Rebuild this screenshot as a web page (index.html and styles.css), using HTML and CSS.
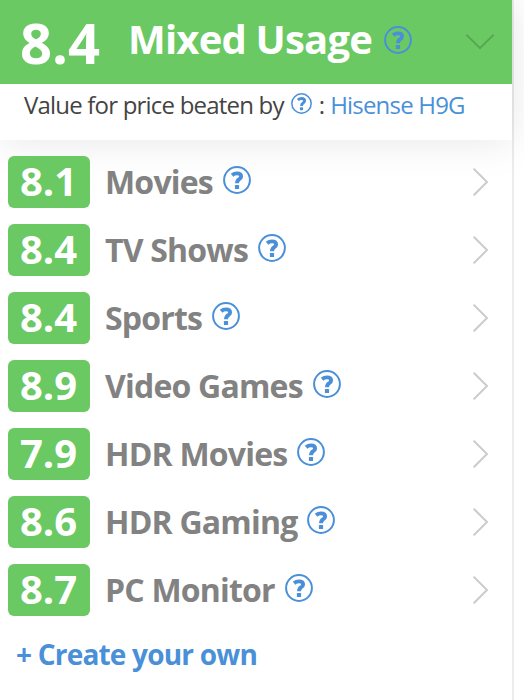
FILE: index.html
```html
<!DOCTYPE html>
<html lang="en">
<head>
    <meta charset="UTF-8">
    <meta name="viewport" content="width=device-width, initial-scale=1.0">
    <title>Mixed Usage</title>
    <link rel="stylesheet" href="styles.css">
</head>
<body>
    <svg class="sprite">
        <symbol id="help" viewBox="0 0 28 28">
            <circle cx="14" cy="14" r="12.9" fill="none" stroke="currentColor" stroke-width="2"/>
            <path d="M9.1 9.3Q11.2 7.4 14 7.4Q18.1 7.4 18.1 10.4Q18.1 12 16.2 13.2Q14 14.5 14 17.3" fill="none" stroke="currentColor" stroke-width="3.9"/>
            <rect x="11.9" y="19" width="4.2" height="4" rx=".6" fill="currentColor"/>
        </symbol>
        <symbol id="arrow" viewBox="0 0 16 28">
            <path d="M1.2 1.2L14 14L1.2 26.8" fill="none" stroke="currentColor" stroke-width="2" stroke-linecap="round"/>
        </symbol>
    </svg>

    <div class="card">
        <div class="top">
            <div class="header">
                <span class="total">8.4</span>
                <h1>Mixed Usage</h1>
                <svg class="help"><use href="#help"/></svg>
                <svg class="chevron" viewBox="0 0 28 16"><path d="M1 1.4L14 14.2L27 1.4" fill="none" stroke="currentColor" stroke-width="2" stroke-linecap="round"/></svg>
            </div>
            <div class="value">
                <span>Value for price beaten by</span>
                <svg class="help small"><use href="#help"/></svg>
                <span class="colon">:</span>
                <a href="#">Hisense H9G</a>
            </div>
        </div>
        <div class="list">
            <div class="row"><span class="score">8.1</span><span class="name">Movies</span><svg class="help"><use href="#help"/></svg><svg class="arrow"><use href="#arrow"/></svg></div>
            <div class="row"><span class="score">8.4</span><span class="name">TV Shows</span><svg class="help"><use href="#help"/></svg><svg class="arrow"><use href="#arrow"/></svg></div>
            <div class="row"><span class="score">8.4</span><span class="name">Sports</span><svg class="help"><use href="#help"/></svg><svg class="arrow"><use href="#arrow"/></svg></div>
            <div class="row"><span class="score">8.9</span><span class="name">Video Games</span><svg class="help"><use href="#help"/></svg><svg class="arrow"><use href="#arrow"/></svg></div>
            <div class="row"><span class="score">7.9</span><span class="name">HDR Movies</span><svg class="help"><use href="#help"/></svg><svg class="arrow"><use href="#arrow"/></svg></div>
            <div class="row"><span class="score">8.6</span><span class="name">HDR Gaming</span><svg class="help"><use href="#help"/></svg><svg class="arrow"><use href="#arrow"/></svg></div>
            <div class="row"><span class="score">8.7</span><span class="name">PC Monitor</span><svg class="help"><use href="#help"/></svg><svg class="arrow"><use href="#arrow"/></svg></div>
        </div>
        <a class="create" href="#">+ Create your own</a>
    </div>
</body>
</html>
```
FILE: styles.css
```css
* {
    box-sizing: border-box;
}
body {
    margin: 0;
    height: 700px;
    overflow: hidden;
    background-color: #fff;
    font-family: "Open Sans", sans-serif;
    letter-spacing: -0.8px;
}
a {
    color: #4a90d9;
    text-decoration: none;
}
.sprite {
    display: none;
}
.card {
    width: 514px;
    height: 700px;
    border-right: 2px solid #ececec;
}
.top {
    height: 140px;
    background-color: #fff;
    box-shadow: 0 0 40px rgba(0, 0, 0, 0.1);
}
.header {
    display: flex;
    height: 84px;
    padding-left: 20px;
    background-color: #6ac962;
    color: #fff;
}
.total {
    width: 108px;
    font-size: 56px;
    font-weight: 700;
    line-height: 84px;
    letter-spacing: 0;
}
h1 {
    margin: 0;
    font-size: 40px;
    font-weight: 700;
    line-height: 78px;
    white-space: nowrap;
}
.help {
    flex: none;
    width: 28px;
    height: 28px;
    color: #4a90d9;
}
.header .help {
    margin: 26px 0 0 12px;
}
.chevron {
    width: 28px;
    height: 16px;
    margin: 34px 18px 0 auto;
    color: #58a651;
}
.value {
    display: flex;
    height: 56px;
    padding-left: 24px;
    color: #444;
    font-size: 24px;
    line-height: 42px;
    white-space: nowrap;
}
.help.small {
    width: 21px;
    height: 21px;
    margin: 9px 0 0 7px;
}
.colon {
    margin: 0 6px 0 7px;
}
.list {
    padding: 16px 0 0 8px;
}
.row {
    display: flex;
    height: 52px;
    margin-bottom: 16px;
}
.score {
    width: 82px;
    border-radius: 6px;
    background-color: #6ac962;
    color: #fff;
    font-size: 40px;
    font-weight: 700;
    line-height: 50px;
    letter-spacing: 0;
    padding-left: 12px;
}
.name {
    margin-left: 15px;
    color: #828282;
    font-size: 32px;
    font-weight: 700;
    line-height: 52px;
    white-space: nowrap;
}
.row .help {
    margin: 10px 0 0 10px;
}
.arrow {
    width: 16px;
    height: 28px;
    margin: 12px 23px 0 auto;
    color: #ccc;
}
.create {
    display: block;
    margin-left: 16px;
    font-size: 28px;
    font-weight: 700;
    line-height: 44px;
}
```
